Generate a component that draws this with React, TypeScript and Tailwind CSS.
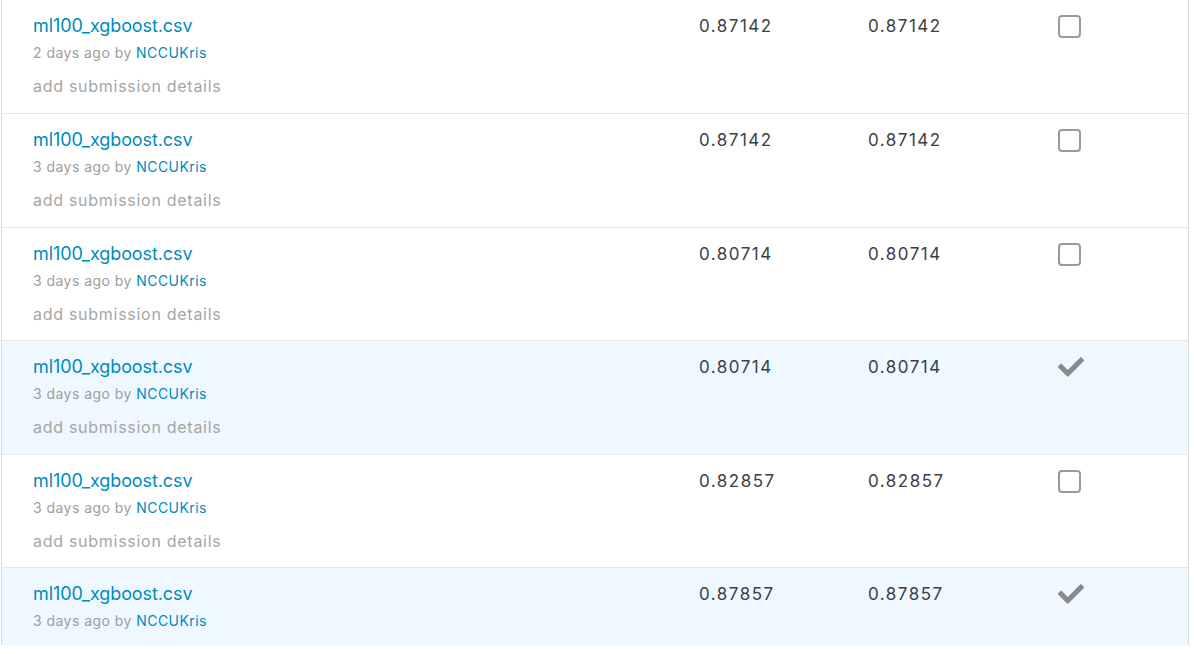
import React from "react";
import { FaCheck } from "react-icons/fa";

type Row = { when: string; pub: string; priv: string; selected: boolean };

const rows: Row[] = [
  { when: "2 days ago", pub: "0.87142", priv: "0.87142", selected: false },
  { when: "3 days ago", pub: "0.87142", priv: "0.87142", selected: false },
  { when: "3 days ago", pub: "0.80714", priv: "0.80714", selected: false },
  { when: "3 days ago", pub: "0.80714", priv: "0.80714", selected: true },
  { when: "3 days ago", pub: "0.82857", priv: "0.82857", selected: false },
  { when: "3 days ago", pub: "0.87857", priv: "0.87857", selected: true },
];

export default function App() {
  return (
    <div
      className="w-[1194px] h-[654px] bg-white overflow-hidden"
      style={{ fontFamily: "Inter, 'Noto Sans', sans-serif" }}
    >
      <div className="ml-[1px] w-[1188px] h-[645px] overflow-hidden border-l border-r border-[#d9d9d9]">
        {rows.map((r, i) => (
          <div
            key={i}
            className={`flex h-[113.4px] pr-[2px] ${i > 0 ? "border-t border-[#e8e8e8]" : ""} ${
              r.selected ? "bg-[#eef8fe]" : "bg-white"
            }`}
          >
            <div className="w-[697px] shrink-0 pl-[31px] pt-[14px] flex flex-col">
              <div className="text-[18px] leading-[24px] text-[#008abc] tracking-[-0.1px]">ml100_xgboost.csv</div>
              <div className="mt-[5px] text-[14px] leading-[20px] text-[#9e9e9e] tracking-[0.45px]">
                {r.when} by <span className="text-[#008abc]">NCCUKris</span>
              </div>
              <div className="mt-[11px] text-[16px] leading-[24px] text-[#a6a6a6] tracking-[0.72px]">add submission details</div>
            </div>
            <div className="w-[169px] shrink-0 pt-[14px] text-[17px] leading-[24px] text-[#3c4043] tracking-[1.5px]">{r.pub}</div>
            <div className="w-[190px] shrink-0 pt-[14px] text-[17px] leading-[24px] text-[#3c4043] tracking-[1.5px]">{r.priv}</div>
            <div className={r.selected ? "pt-[13px]" : "pt-[15px]"}>
              {r.selected ? (
                <FaCheck className="text-[#8a8a8a] w-[26px] h-[26px]" />
              ) : (
                <div className="w-[23px] h-[23px] rounded-[4px] border-2 border-[#9a9a9a]" />
              )}
            </div>
          </div>
        ))}
      </div>
    </div>
  );
}
